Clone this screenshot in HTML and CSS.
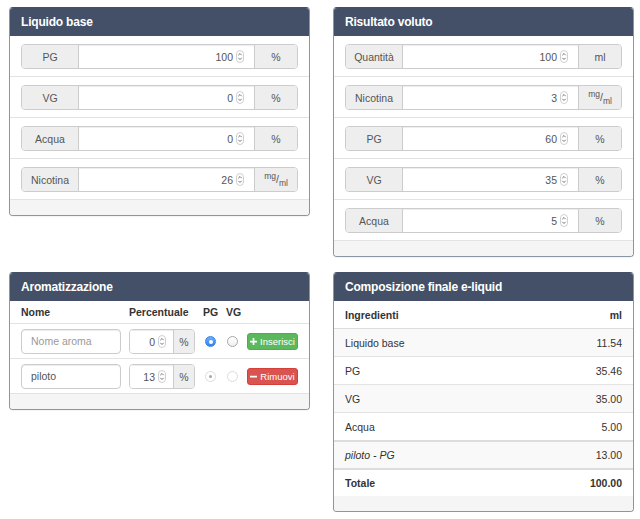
FILE: index.html
```html
<!DOCTYPE html>
<html lang="it">
<head>
    <meta charset="UTF-8">
    <meta name="viewport" content="width=device-width, initial-scale=1.0">
    <title>Calcolatore e-liquid</title>
    <link rel="stylesheet" href="styles.css">
</head>
<body>

<div class="page">

    <!-- Liquido base -->
    <div class="panel">
        <div class="panel-heading">Liquido base</div>
        <div class="form-row">
            <div class="input-group">
                <span class="addon name">PG</span>
                <div class="field"><span>100</span><svg class="spin" viewBox="0 0 8 13"><rect x="0.5" y="0.5" width="7" height="12" rx="3.5"/><path d="M2.3 5.2 L4 3.5 L5.7 5.2 M2.3 7.8 L4 9.5 L5.7 7.8"/></svg></div>
                <span class="addon unit">%</span>
            </div>
        </div>
        <div class="form-row">
            <div class="input-group">
                <span class="addon name">VG</span>
                <div class="field"><span>0</span><svg class="spin" viewBox="0 0 8 13"><rect x="0.5" y="0.5" width="7" height="12" rx="3.5"/><path d="M2.3 5.2 L4 3.5 L5.7 5.2 M2.3 7.8 L4 9.5 L5.7 7.8"/></svg></div>
                <span class="addon unit">%</span>
            </div>
        </div>
        <div class="form-row">
            <div class="input-group">
                <span class="addon name">Acqua</span>
                <div class="field"><span>0</span><svg class="spin" viewBox="0 0 8 13"><rect x="0.5" y="0.5" width="7" height="12" rx="3.5"/><path d="M2.3 5.2 L4 3.5 L5.7 5.2 M2.3 7.8 L4 9.5 L5.7 7.8"/></svg></div>
                <span class="addon unit">%</span>
            </div>
        </div>
        <div class="form-row">
            <div class="input-group">
                <span class="addon name">Nicotina</span>
                <div class="field"><span>26</span><svg class="spin" viewBox="0 0 8 13"><rect x="0.5" y="0.5" width="7" height="12" rx="3.5"/><path d="M2.3 5.2 L4 3.5 L5.7 5.2 M2.3 7.8 L4 9.5 L5.7 7.8"/></svg></div>
                <span class="addon unit"><span class="frac"><sup>mg</sup>/<sub>ml</sub></span></span>
            </div>
        </div>
        <div class="panel-footer"></div>
    </div>

    <!-- Risultato voluto -->
    <div class="panel">
        <div class="panel-heading">Risultato voluto</div>
        <div class="form-row">
            <div class="input-group">
                <span class="addon name">Quantità</span>
                <div class="field"><span>100</span><svg class="spin" viewBox="0 0 8 13"><rect x="0.5" y="0.5" width="7" height="12" rx="3.5"/><path d="M2.3 5.2 L4 3.5 L5.7 5.2 M2.3 7.8 L4 9.5 L5.7 7.8"/></svg></div>
                <span class="addon unit">ml</span>
            </div>
        </div>
        <div class="form-row">
            <div class="input-group">
                <span class="addon name">Nicotina</span>
                <div class="field"><span>3</span><svg class="spin" viewBox="0 0 8 13"><rect x="0.5" y="0.5" width="7" height="12" rx="3.5"/><path d="M2.3 5.2 L4 3.5 L5.7 5.2 M2.3 7.8 L4 9.5 L5.7 7.8"/></svg></div>
                <span class="addon unit"><span class="frac"><sup>mg</sup>/<sub>ml</sub></span></span>
            </div>
        </div>
        <div class="form-row">
            <div class="input-group">
                <span class="addon name">PG</span>
                <div class="field"><span>60</span><svg class="spin" viewBox="0 0 8 13"><rect x="0.5" y="0.5" width="7" height="12" rx="3.5"/><path d="M2.3 5.2 L4 3.5 L5.7 5.2 M2.3 7.8 L4 9.5 L5.7 7.8"/></svg></div>
                <span class="addon unit">%</span>
            </div>
        </div>
        <div class="form-row">
            <div class="input-group">
                <span class="addon name">VG</span>
                <div class="field"><span>35</span><svg class="spin" viewBox="0 0 8 13"><rect x="0.5" y="0.5" width="7" height="12" rx="3.5"/><path d="M2.3 5.2 L4 3.5 L5.7 5.2 M2.3 7.8 L4 9.5 L5.7 7.8"/></svg></div>
                <span class="addon unit">%</span>
            </div>
        </div>
        <div class="form-row">
            <div class="input-group">
                <span class="addon name">Acqua</span>
                <div class="field"><span>5</span><svg class="spin" viewBox="0 0 8 13"><rect x="0.5" y="0.5" width="7" height="12" rx="3.5"/><path d="M2.3 5.2 L4 3.5 L5.7 5.2 M2.3 7.8 L4 9.5 L5.7 7.8"/></svg></div>
                <span class="addon unit">%</span>
            </div>
        </div>
        <div class="panel-footer"></div>
    </div>

    <!-- Aromatizzazione -->
    <div class="panel">
        <div class="panel-heading">Aromatizzazione</div>
        <div class="aroma-row aroma-head">
            <span>Nome</span>
            <span>Percentuale</span>
            <span>PG</span>
            <span>VG</span>
            <span></span>
        </div>
        <div class="aroma-row">
            <div class="text-input placeholder">Nome aroma</div>
            <div class="input-group small">
                <div class="field"><span>0</span><svg class="spin" viewBox="0 0 8 13"><rect x="0.5" y="0.5" width="7" height="12" rx="3.5"/><path d="M2.3 5.2 L4 3.5 L5.7 5.2 M2.3 7.8 L4 9.5 L5.7 7.8"/></svg></div>
                <span class="addon unit">%</span>
            </div>
            <span class="radio checked"></span>
            <span class="radio"></span>
            <button class="btn btn-success">
                <svg viewBox="0 0 8 8"><path d="M3 0h2v3h3v2H5v3H3V5H0V3h3z"/></svg>Inserisci
            </button>
        </div>
        <div class="aroma-row">
            <div class="text-input">piloto</div>
            <div class="input-group small">
                <div class="field"><span>13</span><svg class="spin" viewBox="0 0 8 13"><rect x="0.5" y="0.5" width="7" height="12" rx="3.5"/><path d="M2.3 5.2 L4 3.5 L5.7 5.2 M2.3 7.8 L4 9.5 L5.7 7.8"/></svg></div>
                <span class="addon unit">%</span>
            </div>
            <span class="radio disabled checked"></span>
            <span class="radio disabled"></span>
            <button class="btn btn-danger">
                <svg viewBox="0 0 8 8"><path d="M0 3h8v2H0z"/></svg>Rimuovi
            </button>
        </div>
        <div class="panel-footer"></div>
    </div>

    <!-- Composizione finale -->
    <div class="panel">
        <div class="panel-heading">Composizione finale e-liquid</div>
        <table class="result">
            <thead>
                <tr><th>Ingredienti</th><th class="num">ml</th></tr>
            </thead>
            <tbody>
                <tr class="striped"><td>Liquido base</td><td class="num">11.54</td></tr>
                <tr><td>PG</td><td class="num">35.46</td></tr>
                <tr class="striped"><td>VG</td><td class="num">35.00</td></tr>
                <tr><td>Acqua</td><td class="num">5.00</td></tr>
            </tbody>
            <tbody>
                <tr class="striped"><td><em>piloto - PG</em></td><td class="num">13.00</td></tr>
            </tbody>
            <tbody>
                <tr class="total"><td>Totale</td><td class="num">100.00</td></tr>
            </tbody>
        </table>
        <div class="panel-footer"></div>
    </div>

</div>

</body>
</html>
```

FILE: styles.css
```css
body {
    font-family: "Liberation Sans", Arial, sans-serif;
    font-size: 10.5px;
    color: #333;
    background-color: #fff;
    margin: 0;
}

.page {
    display: grid;
    grid-template-columns: 301px 301px;
    column-gap: 23px;
    row-gap: 15px;
    align-items: start;
    padding: 7px 0 0 9px;
}

/* Panels */
.panel {
    border: 1px solid #8b95a3;
    border-top-color: #435067;
    border-radius: 4px;
    background-color: #fff;
    box-shadow: 0 1px 1px rgba(0, 0, 0, 0.05);
    overflow: hidden;
}

.panel-heading {
    background-color: #435067;
    color: #fff;
    font-size: 12px;
    font-weight: bold;
    height: 28px;
    line-height: 28px;
    padding: 0 11px;
    letter-spacing: -0.2px;
}

.panel-footer {
    background-color: #f5f5f5;
    height: 15px;
}

/* Input rows */
.form-row {
    padding: 8px 11px 7px;
    border-bottom: 1px solid #e3e3e3;
}

.input-group {
    display: flex;
    height: 25px;
    border: 1px solid #ccc;
    border-radius: 4px;
    box-sizing: border-box;
    overflow: hidden;
    color: #555;
}

.addon {
    display: flex;
    align-items: center;
    justify-content: center;
    background-color: #eee;
    flex: none;
}

.addon.name {
    width: 56px;
    border-right: 1px solid #ccc;
}

.addon.unit {
    width: 42px;
    border-left: 1px solid #ccc;
}

.frac {
    line-height: 1;
}

.frac sup,
.frac sub {
    font-size: 8.5px;
    line-height: 0;
}

.frac sup {
    vertical-align: 4px;
}

.frac sub {
    vertical-align: -3px;
}

.field {
    flex: 1;
    display: flex;
    align-items: center;
    justify-content: flex-end;
    gap: 3px;
    padding-right: 10px;
    background-color: #fff;
    box-shadow: inset 0 1px 1px rgba(0, 0, 0, 0.075);
}

.spin {
    width: 8px;
    height: 13px;
}

.spin rect {
    fill: #fff;
    stroke: #c4c4c4;
    stroke-width: 0.8;
}

.spin path {
    fill: none;
    stroke: #666;
    stroke-width: 0.9;
}

/* Aromatizzazione */
.aroma-row {
    display: grid;
    grid-template-columns: 100px 66px 15px 13px 51px;
    column-gap: 8px;
    align-items: center;
    padding: 5px 11px 4px;
    border-bottom: 1px solid #e3e3e3;
}

.aroma-head {
    font-weight: bold;
    height: 22px;
    padding: 0 11px;
}

.text-input {
    height: 25px;
    line-height: 23px;
    box-sizing: border-box;
    border: 1px solid #ccc;
    border-radius: 4px;
    padding-left: 9px;
    color: #555;
    box-shadow: inset 0 1px 1px rgba(0, 0, 0, 0.075);
}

.text-input.placeholder {
    color: #999;
}

.input-group.small .addon.unit {
    width: 20px;
}

.input-group.small .field {
    padding-right: 7px;
}

.radio {
    justify-self: center;
    width: 11px;
    height: 11px;
    box-sizing: border-box;
    border: 1px solid #a8a8a8;
    border-radius: 50%;
    background: linear-gradient(#fff, #f0f0f0);
    display: flex;
    align-items: center;
    justify-content: center;
}

.aroma-row .radio:nth-child(4) {
    justify-self: start;
    margin-left: 1px;
}

.radio.checked {
    border-color: #3a82e8;
    background: linear-gradient(#6cb0fb, #2f7ff0);
}

.radio.checked::after {
    content: "";
    width: 4px;
    height: 4px;
    border-radius: 50%;
    background-color: #fff;
}

.radio.disabled {
    border-color: #dcdcdc;
    background: #fff;
}

.radio.disabled.checked::after {
    width: 3px;
    height: 3px;
    background-color: #a8a8a8;
}

.btn {
    display: flex;
    align-items: center;
    justify-content: center;
    gap: 3px;
    height: 17px;
    padding: 0;
    border: 1px solid transparent;
    border-radius: 3px;
    color: #fff;
    font-family: inherit;
    font-size: 9.5px;
    cursor: pointer;
}

.btn svg {
    width: 7px;
    height: 7px;
    fill: #fff;
}

.btn-success {
    background-color: #5cb85c;
    border-color: #4cae4c;
}

.btn-danger {
    background-color: #d9534f;
    border-color: #d43f3a;
}

/* Result table */
.result {
    width: 100%;
    border-collapse: collapse;
}

.result th,
.result td {
    text-align: left;
    padding: 0 11px;
    height: 27px;
    border-top: 1px solid #e3e3e3;
}

.result th {
    border-top: none;
    border-bottom: 1px solid #ddd;
}

.result .num {
    text-align: right;
}

.result tbody + tbody {
    border-top: 2px solid #ddd;
}

.result tbody + tbody td {
    height: 26px;
}

.result tr.striped {
    background-color: #f9f9f9;
}

.result tr.total td {
    font-weight: bold;
}

.result em {
    font-style: italic;
}
```
